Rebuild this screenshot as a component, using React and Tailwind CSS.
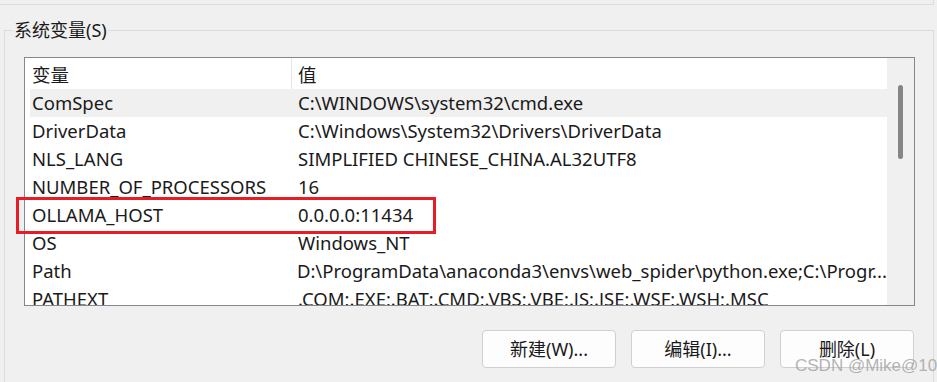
const rows = [
  { name: 'ComSpec', value: 'C:\\WINDOWS\\system32\\cmd.exe', selected: true },
  { name: 'DriverData', value: 'C:\\Windows\\System32\\Drivers\\DriverData' },
  { name: 'NLS_LANG', value: 'SIMPLIFIED CHINESE_CHINA.AL32UTF8' },
  { name: 'NUMBER_OF_PROCESSORS', value: '16' },
  { name: 'OLLAMA_HOST', value: '0.0.0.0:11434' },
  { name: 'OS', value: 'Windows_NT' },
  { name: 'Path', value: 'D:\\ProgramData\\anaconda3\\envs\\web_spider\\python.exe;C:\\Progr...' },
  { name: 'PATHEXT', value: '.COM;.EXE;.BAT;.CMD;.VBS;.VBE;.JS;.JSE;.WSF;.WSH;.MSC' },
];

function App() {
  return (
    <div className="relative h-[382px] w-[937px] overflow-hidden bg-[#f0f0f0] text-[18px] text-[#1a1a1a] font-['Noto_Sans','Noto_Sans_CJK_SC',sans-serif]">
      <div className="h-[5px] w-[934px] border-b border-r border-[#dcdcdc]" />

      <fieldset className="mt-[14px] ml-[4px] h-[400px] w-[930px] border border-[#dcdcdc]">
        <legend className="ml-[8px] px-[1px] leading-[22px]">系统变量(S)</legend>

        <div className="mt-[16px] ml-[19px] flex h-[249px] w-[891px] border border-[#828790] bg-white text-[18.5px]">
          <div className="flex-1 overflow-hidden pl-[5px]">
            <div className="flex h-[31px] items-center pt-[3px]">
              <div className="w-[261px] pl-[2px]">变量</div>
              <div className="-mt-[3px] h-[31px] w-px bg-[#e5e5e5]" />
              <div className="pl-[6px]">值</div>
            </div>
            {rows.map((row) => (
              <div
                key={row.name}
                className={`flex h-[28px] items-center whitespace-nowrap ${row.selected ? 'bg-[#f0f0f0]' : ''}`}
              >
                <div className="w-[262px] pl-[2px]">{row.name}</div>
                <div className="pl-[6px]">{row.value}</div>
              </div>
            ))}
          </div>
          <div className="w-[27px] bg-[#f0f0f0] pl-[11px] pt-[27px]">
            <div className="h-[74px] w-[5px] rounded-full bg-[#858585]" />
          </div>
        </div>

        <div className="mt-[24px] ml-[19px] flex w-[891px] justify-end gap-[15px] pr-[1px]">
          <button className="h-[38px] w-[134px] rounded-[4px] border border-[#d0d0d0] bg-[#fdfdfd]">新建(W)...</button>
          <button className="h-[38px] w-[134px] rounded-[4px] border border-[#d0d0d0] bg-[#fdfdfd]">编辑(I)...</button>
          <button className="h-[38px] w-[134px] rounded-[4px] border border-[#d0d0d0] bg-[#fdfdfd]">删除(L)</button>
        </div>
      </fieldset>

      <div className="pointer-events-none absolute left-[856px] top-[86px] flex flex-col text-[22px] font-bold italic leading-[32px] text-black/[0.02] font-['DejaVu_Serif',serif]">
        <span>28-05-</span>
        <span>mike10</span>
        <span>Mike</span>
      </div>

      <div className="pointer-events-none absolute left-[16px] top-[197px] h-[37px] w-[420px] border-[3px] border-[#e81c24]" />

      <div className="pointer-events-none absolute left-[795px] top-[355px] whitespace-nowrap text-[17px] leading-[22px] text-[#a0a0a0]/80 font-['Liberation_Sans',sans-serif]">
        CSDN @Mike@10
      </div>
    </div>
  );
}

export default App;
